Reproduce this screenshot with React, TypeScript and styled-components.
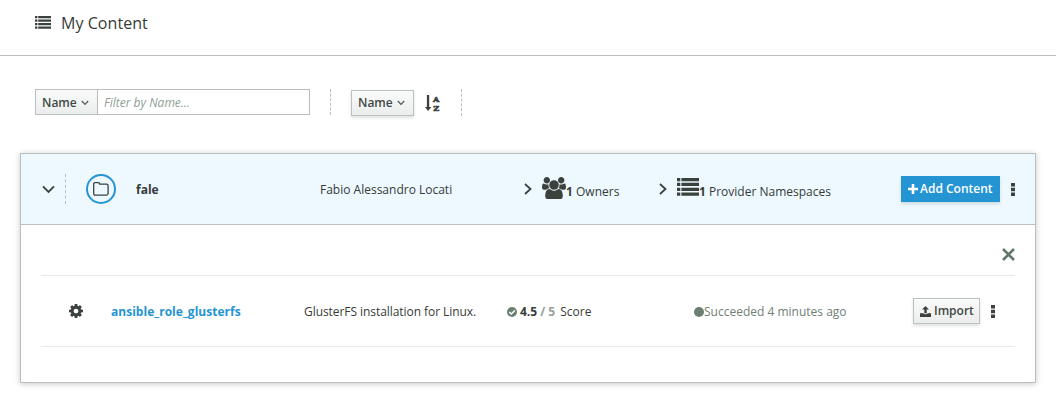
import React from 'react';
import styled, { createGlobalStyle } from 'styled-components';

const Global = createGlobalStyle`
  * { box-sizing: border-box; }
  body {
    margin: 0;
    background: #fff;
    color: #363b38;
    font: 12px/20px 'Open Sans', 'Noto Sans', sans-serif;
  }
  svg { display: block; flex: none; }
`;

const Page = styled.div`
  width: 1056px;
  height: 416px;
  overflow: hidden;
`;

const PageHeader = styled.header`
  display: flex;
  align-items: center;
  height: 56px;
  padding: 0 35px 10px;
  gap: 10px;
  border-bottom: 1px solid #bbbdbc;
`;

const Title = styled.h1`
  margin: 0;
  font-size: 16px;
  line-height: 24px;
  font-weight: 400;
  letter-spacing: 0.05px;
`;

const Toolbar = styled.div`
  display: flex;
  align-items: flex-start;
  height: 97px;
  padding: 33px 35px 0;
`;

const FilterGroup = styled.div`
  display: flex;
`;

const SortGroup = styled.div`
  display: flex;
  align-items: center;
  gap: 11px;
  padding-top: 1px;
`;

const Button = styled.button<{ $primary?: boolean; $flat?: boolean }>`
  display: flex;
  align-items: center;
  flex: none;
  height: 26px;
  margin: 0;
  padding: 0 6px;
  border: 1px solid ${p => (p.$primary ? '#2494d3' : '#bbc0c0')};
  background: ${p => (p.$primary ? '#2494d3' : 'linear-gradient(#fafafa, #ebeded)')};
  color: ${p => (p.$primary ? '#fff' : '#414844')};
  box-shadow: ${p => (p.$flat ? 'none' : '0 2px 3px rgba(3, 3, 3, 0.12)')};
  font: 600 12px/20px 'Open Sans', 'Noto Sans', sans-serif;
  white-space: nowrap;
`;

const FilterInput = styled.input`
  width: 213px;
  height: 26px;
  margin: 0 0 0 -1px;
  padding: 1px 6px 0;
  border: 1px solid #bbbdbc;
  background: #fff;
  font: 12px/20px 'Open Sans', 'Noto Sans', sans-serif;
  &::placeholder {
    color: #8f9f95;
    font-style: italic;
    opacity: 1;
  }
`;

const Divider = styled.div<{ $height: number; $left?: number; $right?: number }>`
  flex: none;
  width: 0;
  height: ${p => p.$height}px;
  margin: 0 ${p => p.$right ?? 0}px 0 ${p => p.$left ?? 0}px;
  border-left: 1px dashed #bbbdbc;
`;

const Card = styled.section`
  width: 1016px;
  height: 230px;
  margin-left: 20px;
  border: 1px solid #bbbfbf;
  box-shadow: 0 1px 6px rgba(3, 3, 3, 0.22);
`;

const CardHeader = styled.div`
  display: flex;
  align-items: center;
  height: 71px;
  padding: 0 20px;
  background: #edf8ff;
  border-bottom: 1px solid #bbbfbf;
`;

const FolderBadge = styled.div`
  display: flex;
  align-items: center;
  justify-content: center;
  flex: none;
  width: 30px;
  height: 30px;
  margin-right: 20px;
  border: 2px solid #2494d3;
  border-radius: 50%;
`;

const Cell = styled.div<{ $width: number; $gap?: number; $drop?: number }>`
  display: flex;
  align-items: center;
  flex: none;
  width: ${p => p.$width}px;
  gap: ${p => p.$gap ?? 0}px;
  padding-top: ${p => p.$drop ?? 0}px;
  white-space: nowrap;
`;

const Toggle = styled.div`
  flex: none;
  width: 24px;
  padding-left: 1px;
`;

const Counter = styled(Cell)`
  align-items: flex-start;
  height: 24px;
`;

const Count = styled.span<{ $top: number }>`
  padding-top: ${p => p.$top}px;
`;

const Actions = styled.div<{ $right?: number }>`
  display: flex;
  align-items: center;
  gap: 11px;
  margin-left: auto;
  padding-right: ${p => p.$right ?? 0}px;
`;

const CardBody = styled.div`
  padding: 0 20px;
`;

const CloseRow = styled.div`
  display: flex;
  justify-content: flex-end;
  align-items: center;
  height: 50px;
  padding-top: 8px;
`;

const Row = styled.div`
  display: flex;
  align-items: center;
  height: 72px;
  padding-left: 28px;
  border: solid #e8eaea;
  border-width: 1px 0;
`;

const RoleLink = styled.a`
  color: #2494d3;
  font-weight: 700;
  letter-spacing: 0.02px;
`;

const Description = styled.span`
  letter-spacing: -0.06px;
`;

const Muted = styled.span`
  color: #94a198;
`;

const Score = styled.span`
  margin-left: 2px;
`;

const Status = styled.span`
  color: #708075;
`;

const Dot = styled.span`
  width: 10px;
  height: 10px;
  border-radius: 50%;
  background: #6b8070;
`;

const ListIcon = ({ width, height }: { width: number; height: number }) => (
  <svg width={width} height={height} viewBox="0 0 16 13" preserveAspectRatio="none" fill="#3b423e">
    {[0, 3.5, 7, 10.5].map(y => (
      <path key={y} d={`M0 ${y}h2.400v2.300H0zM3.200 ${y}H16v2.300H3.200z`} />
    ))}
  </svg>
);

const Caret = () => (
  <svg width="8" height="6" fill="none" stroke="#4d5952" strokeWidth="1.200">
    <path d="M.8 1L4 4.400L7.200 1" />
  </svg>
);

const ChevronDown = () => (
  <svg width="13" height="9" fill="none" stroke="#3b423e" strokeWidth="1.900">
    <path d="M1 1.300L6.500 6.900L12 1.300" />
  </svg>
);

const ChevronRight = () => (
  <svg width="8" height="12" fill="none" stroke="#3b423e" strokeWidth="1.800">
    <path d="M1 1L6.500 6L1 11" />
  </svg>
);

const SortIcon = () => (
  <svg width="16" height="22" viewBox="0 -2 16 22" fill="#3b423e">
    <path d="M1.900 1h2.300v12h2.200L3.100 17 0 13h1.900z" />
    <g fontFamily="DejaVu Serif, serif" fontWeight="700" fontSize="8.200" textAnchor="middle" stroke="#3b423e" strokeWidth=".6">
      <text x="11.300" y="7.500">A</text>
      <text x="11.300" y="17.200">Z</text>
    </g>
  </svg>
);

const FolderIcon = () => (
  <svg width="16" height="14" viewBox="0 0 16 14" fill="none" stroke="#3b423e" strokeWidth="1.300">
    <path d="M.7 2.200Q.7.7 2.200.7h3q1.500 0 1.500 1.500h6.900q1.500 0 1.500 1.500v7.900q0 1.500-1.500 1.500H2.200Q.7 13.100.7 11.600z" />
  </svg>
);

const UsersIcon = () => (
  <svg width="24" height="22.400" viewBox="0 0 1920 1792" fill="#3b423e">
    <path d="M593 896q-162 5-265 128H194q-82 0-138-40.500T0 865q0-353 124-353 6 0 43.500 21t97.500 42.500T384 597q67 0 133-23-5 37-5 66 0 139 81 256zm1071 637q0 120-73 189.500t-194 69.500H523q-121 0-194-69.500T256 1533q0-53 3.500-103.500t14-109T300 1212t43-97.500 62-81 85.500-53.500T602 960q10 0 43 21.500t73 48 107 48 135 21.500 135-21.500 107-48 73-48 43-21.500q61 0 111.500 20t85.500 53.500 62 81 43 97.500 26.500 108.500 14 109 3.500 103.500zM640 256q0 106-75 181t-181 75-181-75-75-181 75-181T384 0t181 75 75 181zm704 384q0 159-112.500 271.500T960 1024 688.500 911.500 576 640t112.500-271.500T960 256t271.500 112.500T1344 640zm576 225q0 78-56 118.500t-138 40.500h-134q-103-123-265-128 81-117 81-256 0-29-5-66 66 23 133 23 59 0 119-21.500t97.500-42.500 43.500-21q124 0 124 353zm-128-609q0 106-75 181t-181 75-181-75-75-181 75-181 181-75 181 75 75 181z" />
  </svg>
);

const CogIcon = () => (
  <svg width="14" height="14" viewBox="128 128 1536 1536" fill="#3b423e">
    <path d="M1152 896q0-106-75-181t-181-75-181 75-75 181 75 181 181 75 181-75 75-181zm512-109v222q0 12-8 23t-20 13l-185 28q-19 54-39 91 35 50 107 138 10 12 10 25t-9 23q-27 37-99 108t-94 71q-12 0-26-9l-138-108q-44 23-91 38-16 136-29 186-7 28-36 28h-222q-14 0-24.500-8.500t-11.500-21.500l-28-184q-49-16-90-37l-141 107q-10 9-25 9-14 0-25-11-126-114-165-168-7-10-7-23 0-12 8-23 15-21 51-66.500t54-70.500q-27-50-41-99l-183-27q-13-2-21-12.500t-8-23.500v-222q0-12 8-23t19-13l186-28q14-46 39-92-40-57-107-138-10-12-10-24 0-10 9-23 26-36 98.500-107.500t94.500-71.500q13 0 26 10l138 107q44-23 91-38 16-136 29-186 7-28 36-28h222q14 0 24.500 8.500t11.500 21.500l28 184q49 16 90 37l142-107q9-9 24-9 13 0 25 10 129 119 165 170 7 8 7 22 0 12-8 23-15 21-51 66.500t-54 70.500q26 50 41 98l183 28q13 2 21 12.500t8 23.500z" />
  </svg>
);

const KebabIcon = () => (
  <svg width="4" height="13" fill="#3b423e">
    <path d="M0 0h4v3.400H0zM0 4.800h4v3.400H0zM0 9.600h4V13H0z" />
  </svg>
);

const PlusIcon = () => (
  <svg width="10" height="10" fill="#fff">
    <path d="M3.700 0h2.600v3.700H10v2.600H6.300V10H3.700V6.300H0V3.700h3.700z" />
  </svg>
);

const CloseIcon = () => (
  <svg width="13" height="13" stroke="#63766a" strokeWidth="2.600">
    <path d="M1 1l11 11M12 1L1 12" />
  </svg>
);

const CheckIcon = () => (
  <svg width="10" height="10" viewBox="0 0 10 10">
    <circle cx="5" cy="5" r="5" fill="#6b8070" />
    <path d="M2.300 5l2 2 3.500-3.600" fill="none" stroke="#fff" strokeWidth="1.500" />
  </svg>
);

const UploadIcon = () => (
  <svg width="11" height="11" viewBox="0 0 11 11" fill="#3b423e">
    <path d="M5.500 0L9 3.600H6.700v3.600H4.300V3.600H2zM0 7.200h3.300q.4 1.100 2.200 1.100t2.200-1.100H11V11H0z" />
  </svg>
);

export default function App() {
  return (
    <Page>
      <Global />
      <PageHeader>
        <ListIcon width={16} height={13} />
        <Title>My Content</Title>
      </PageHeader>
      <Toolbar>
        <FilterGroup>
          <Button $flat>
            <Cell $width={49} $gap={4} $drop={2}>Name <Caret /></Cell>
          </Button>
          <FilterInput placeholder="Filter by Name..." />
        </FilterGroup>
        <Divider $height={26} $left={20} $right={20} />
        <SortGroup>
          <Button>
            <Cell $width={49} $gap={4}>Name <Caret /></Cell>
          </Button>
          <SortIcon />
        </SortGroup>
        <Divider $height={27} $left={20} />
      </Toolbar>
      <Card>
        <CardHeader>
          <Toggle><ChevronDown /></Toggle>
          <Divider $height={30} $right={20} />
          <FolderBadge><FolderIcon /></FolderBadge>
          <Cell $width={184} $drop={2}><b>fale</b></Cell>
          <Cell $width={204} $drop={2}>Fabio Alessandro Locati</Cell>
          <Cell $width={18}><ChevronRight /></Cell>
          <Counter $width={117}><UsersIcon /><Count $top={5}><b>1</b> Owners</Count></Counter>
          <Cell $width={18}><ChevronRight /></Cell>
          <Counter $width={180} $drop={1}>
            <ListIcon width={22} height={18} />
            <Count $top={4}><b>1</b> Provider Namespaces</Count>
          </Counter>
          <Actions>
            <Button $primary><Cell $width={85} $gap={2}><PlusIcon />Add Content</Cell></Button>
            <KebabIcon />
          </Actions>
        </CardHeader>
        <CardBody>
          <CloseRow><CloseIcon /></CloseRow>
          <Row>
            <Cell $width={42}><CogIcon /></Cell>
            <Cell $width={193} $drop={2}><RoleLink>ansible_role_glusterfs</RoleLink></Cell>
            <Cell $width={203} $drop={2}><Description>GlusterFS installation for Linux.</Description></Cell>
            <Cell $width={187} $gap={3} $drop={2}>
              <CheckIcon />
              <b>4.5 <Muted>/ 5</Muted></b>
              <Score>Score</Score>
            </Cell>
            <Cell $width={200} $drop={2}><Dot /><Status>Succeeded 4 minutes ago</Status></Cell>
            <Actions $right={20}>
              <Button><Cell $width={53} $gap={3}><UploadIcon />Import</Cell></Button>
              <KebabIcon />
            </Actions>
          </Row>
        </CardBody>
      </Card>
    </Page>
  );
}
